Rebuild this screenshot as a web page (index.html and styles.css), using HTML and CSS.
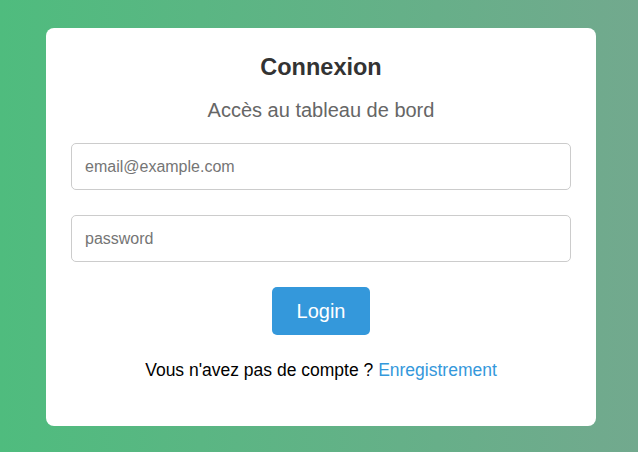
FILE: index.html
```html
<!DOCTYPE html>
<html lang="fr">
<head>
<meta charset="utf-8">
<title>Connexion</title>
<link rel="stylesheet" href="styles.css">
</head>
<body>
<main class="page">
  <form class="card">
    <h2 class="title">Connexion</h2>
    <p class="subtitle">Accès au tableau de bord</p>
    <input class="field" type="email" placeholder="email@example.com">
    <input class="field" type="password" placeholder="password">
    <button class="btn" type="button">Login</button>
    <p class="footer">Vous n'avez pas de compte ? <a class="link" href="#">Enregistrement</a></p>
  </form>
</main>
</body>
</html>
```
FILE: styles.css
```css
html, body {
  margin: 0;
  height: 100%;
}
body {
  font-family: "Liberation Sans", Arial, sans-serif;
  background: linear-gradient(90deg, #4fbc7e 0%, #72a98e 100%);
}
.page {
  height: 100%;
  display: flex;
  align-items: center;
  justify-content: center;
  padding: 2px 0 0 4px;
  box-sizing: border-box;
}
.card {
  width: 550px;
  height: 398px;
  box-sizing: border-box;
  background: #fff;
  border-radius: 8px;
  padding: 26px 25px 0;
  display: flex;
  flex-direction: column;
  align-items: center;
}
.title {
  margin: 0;
  font-size: 23.5px;
  line-height: 26px;
  font-weight: bold;
  color: #333;
}
.subtitle {
  margin: 19px 0 21px;
  font-size: 20px;
  line-height: 23px;
  color: #666;
}
.field {
  width: 100%;
  height: 47px;
  box-sizing: border-box;
  border: 1px solid #ccc;
  border-radius: 5px;
  padding: 0 13px;
  font-family: inherit;
  font-size: 16px;
  margin: 0 0 25px;
  outline: none;
}
.field::placeholder {
  color: #757575;
}
.btn {
  width: 98px;
  height: 48px;
  border: none;
  border-radius: 5px;
  background: #3498db;
  color: #fff;
  font-family: inherit;
  font-size: 20px;
  cursor: pointer;
}
.footer {
  margin: 25px 0 0;
  font-size: 17.5px;
  line-height: 20px;
  color: #000;
}
.link {
  color: #3498db;
  text-decoration: none;
}
```
